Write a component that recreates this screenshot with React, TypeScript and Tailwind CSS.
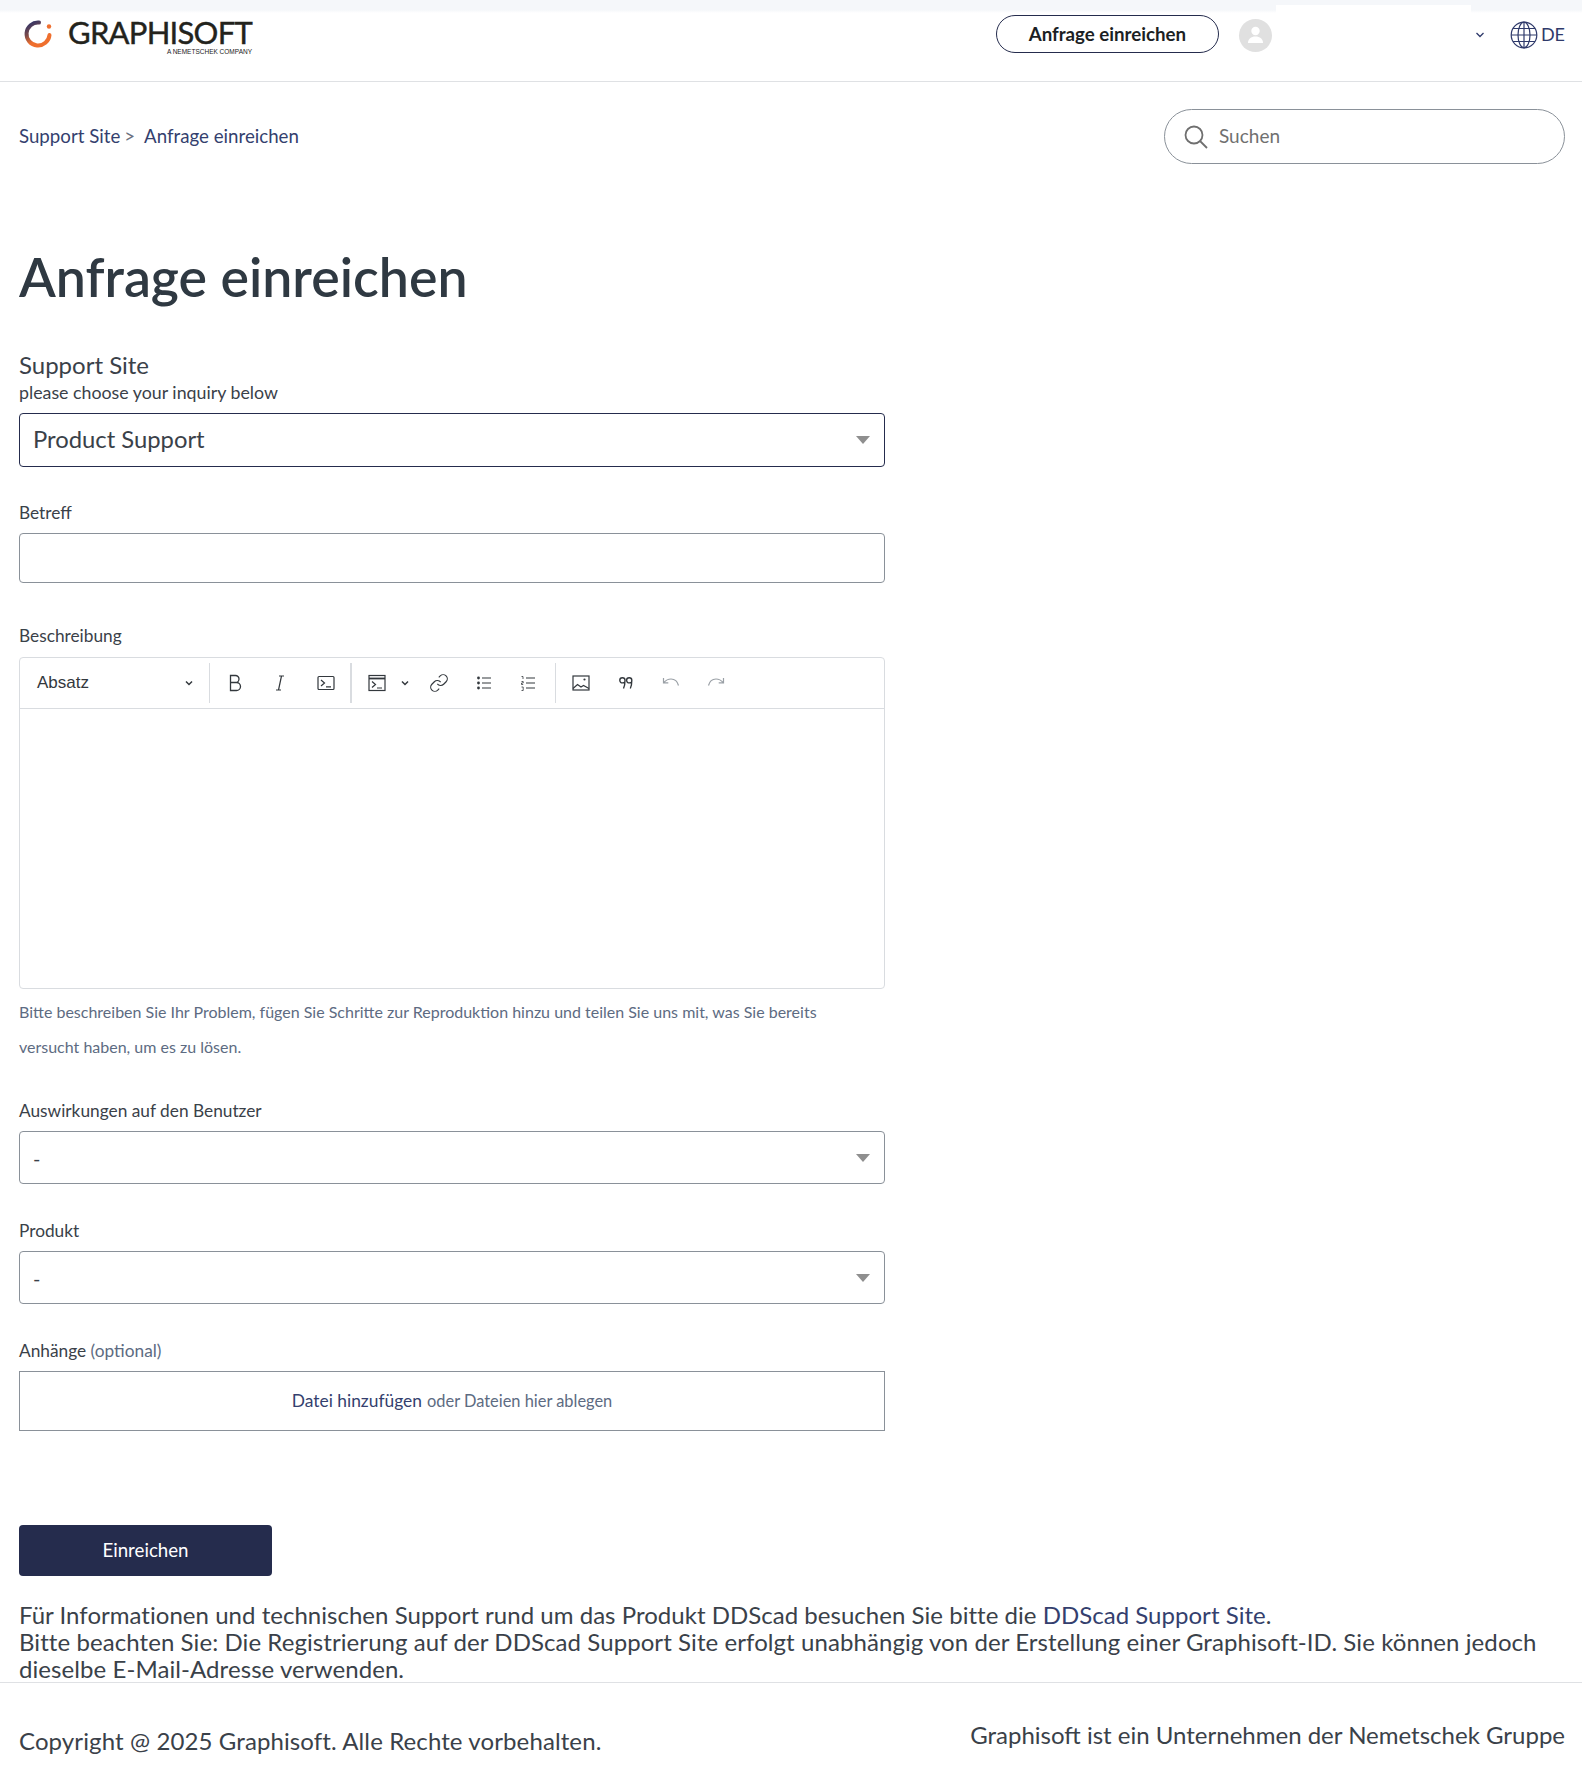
const FONT = "font-['Lato','Liberation_Sans',sans-serif]";

function GraphisoftLogo() {
  return (
    <div className="flex items-start">
      <svg width="32" height="32" viewBox="0 0 32 32" className="mt-[18px] ml-[22px]">
        <defs>
          <linearGradient id="ring" x1="0" y1="0" x2="0.5" y2="1">
            <stop offset="0" stopColor="#27306b" />
            <stop offset="0.45" stopColor="#7a4a4a" />
            <stop offset="0.8" stopColor="#ef6f2e" />
          </linearGradient>
        </defs>
        <path d="M17 4.5A11.5 11.5 0 1 0 27.5 17" fill="none" stroke="url(#ring)" strokeWidth="4" strokeLinecap="round" />
        <circle cx="27" cy="8.500" r="2.200" fill="#ef6f2e" />
      </svg>
      <div className="ml-[14px] mt-[16px] flex flex-col items-end">
        <span className="font-['Lato',sans-serif] text-[31px] leading-[32px] tracking-[-0.75px] text-[#23231c] [-webkit-text-stroke:0.4px_#23231c]">GRAPHISOFT</span>
        <span className="font-['Liberation_Sans',sans-serif] text-[6.500px] leading-[7px] text-[#23231c]">A NEMETSCHEK COMPANY</span>
      </div>
    </div>
  );
}

function GlobeIcon() {
  return (
    <svg width="28" height="28" viewBox="0 0 28 28" fill="none" stroke="#2f3a6b" strokeWidth="1.2">
      <circle cx="14" cy="14" r="12.8" />
      <ellipse cx="14" cy="14" rx="6" ry="12.8" />
      <path d="M14 1.2v25.6M1.2 14h25.6M3 7.5h22M3 20.5h22" />
    </svg>
  );
}

function SelectField({ value, large }: { value: string; large?: boolean }) {
  return (
    <div
      className={`flex items-center justify-between rounded-[4px] border pl-[13px] pr-[14px] ${
        large
          ? "h-[54px] border-[#252c4d] text-[23.800px] text-[#3a4149]"
          : "h-[53px] border-[#8a9199] text-[20px] text-[#3a4149]"
      }`}
    >
      <span>{value}</span>
      <svg width="14" height="8" viewBox="0 0 14 8">
        <path d="M0 0h14L7 8z" fill="#8f8f8f" />
      </svg>
    </div>
  );
}

function FieldLabel({ children }: { children: React.ReactNode }) {
  return <div className="text-[17.300px] leading-[21px] text-[#3a4149]">{children}</div>;
}

const iconProps = { width: 20, height: 20, viewBox: "0 0 20 20", fill: "none", stroke: "#33383d", strokeWidth: 1.1 };

function ToolButton({ children, width = "w-[45px]" }: { children: React.ReactNode; width?: string }) {
  return <div className={`flex h-[36px] items-center justify-center ${width}`}>{children}</div>;
}

function Divider() {
  return <div className="h-[40px] w-px bg-[#d9dce0]" />;
}

function Chevron() {
  return (
    <svg width="10" height="10" viewBox="0 0 10 10" fill="none" stroke="#33383d" strokeWidth="1.5">
      <path d="M2 3.5 5 6.5 8 3.5" />
    </svg>
  );
}

function EditorToolbar() {
  return (
    <div className="flex h-[51px] items-center border-b border-[#d9dce0] pl-[17px] text-[#33383d]">
      <div className="flex w-[172px] items-center justify-between pr-[15px] font-['Liberation_Sans',sans-serif] text-[17px]">
        <span>Absatz</span>
        <Chevron />
      </div>
      <Divider />
      <div className="flex w-[140px] items-center justify-between px-[2px]">
        <ToolButton>
          <svg {...iconProps}><path d="M5.5 2.5h5a3.4 3.4 0 0 1 0 7h-5zM5.5 9.5h6a3.9 3.9 0 0 1 0 8h-6z" strokeWidth="1.3" /></svg>
        </ToolButton>
        <ToolButton>
          <svg {...iconProps}><path d="M9 3h5M6 17h5M11.5 3 8.5 17" strokeWidth="1.2" /></svg>
        </ToolButton>
        <ToolButton>
          <svg {...iconProps} strokeWidth={1.2}><rect x="2" y="3.5" width="16" height="13" rx="1" /><path d="M5 7l3.5 3L5 13M10 13.8h5" /></svg>
        </ToolButton>
      </div>
      <div className="h-[40px] w-[2px] bg-[#d9dce0]" />
      <div className="flex items-center pl-[7.500px]">
        <ToolButton width="w-[35px]">
          <svg {...iconProps} strokeWidth={1.2}><rect x="2" y="2.5" width="16" height="15" /><path d="M2 5.5h16" strokeWidth="1.8" /><path d="M5 8.5l3.5 3L5 14.5M10 15h5" /></svg>
        </ToolButton>
        <ToolButton width="w-[21px]"><Chevron /></ToolButton>
        <ToolButton width="w-[46px]">
          <svg width="20" height="20" viewBox="0 0 24 24" fill="none" stroke="#33383d" strokeWidth="1.400">
            <path d="M10 13a5 5 0 0 0 7.54.54l3-3a5 5 0 0 0-7.07-7.07l-1.72 1.71" />
            <path d="M14 11a5 5 0 0 0-7.54-.54l-3 3a5 5 0 0 0 7.07 7.07l1.71-1.71" />
          </svg>
        </ToolButton>
        <ToolButton width="w-[44px]">
          <svg {...iconProps}><circle cx="4.5" cy="5" r="1.4" fill="#33383d" stroke="none" /><circle cx="4.5" cy="10" r="1.4" fill="#33383d" stroke="none" /><circle cx="4.5" cy="15" r="1.4" fill="#33383d" stroke="none" /><path d="M8 5h9M8 10h9M8 15h9" /></svg>
        </ToolButton>
        <ToolButton>
          <svg {...iconProps}><path d="M3.5 3.5h1.5v2.500M3.5 8.500h1.700v1.500h-1.700v1.500h1.700M3.500 14h1.700v3.500h-1.700" strokeWidth="0.8" /><path d="M8 5h9M8 10h9M8 15h9" /></svg>
        </ToolButton>
      </div>
      <div className="ml-[4px] h-[40px] w-px bg-[#d9dce0]" />
      <div className="flex items-center pl-[3px]">
        <ToolButton>
          <svg {...iconProps} strokeWidth={1.2}><rect x="2" y="3" width="16" height="14" /><circle cx="13.500" cy="6.500" r="1.100" fill="#33383d" stroke="none" /><path d="M2 15.500l4.500-4 3.500 2.500 2.500-1.500 5.500 3" /></svg>
        </ToolButton>
        <ToolButton>
          <svg {...iconProps} strokeWidth={1.400}>
            <path d="M9 7.300a2.600 2.600 0 1 0-2.600 2.600c.9 0 2-.3 2.600-.9M9 7.300c0 3.500-.5 6.200-1.500 8.200" />
            <path d="M15.800 7.300a2.600 2.600 0 1 0-2.600 2.600c.9 0 2-.3 2.600-.9M15.800 7.300c0 3.500-.5 6.200-1.500 8.200" />
          </svg>
        </ToolButton>
        <ToolButton>
          <svg {...iconProps} stroke="#9aa0a6" strokeWidth={1.200}><path d="M2.500 5v4.800h4.800M2.700 9.600C5 7 7.500 6 10 6c3.600 0 6.500 2.500 7.500 6.500" /></svg>
        </ToolButton>
        <ToolButton>
          <svg {...iconProps} stroke="#9aa0a6" strokeWidth={1.200}><path d="M17.500 5v4.800h-4.800M17.300 9.600C15 7 12.500 6 10 6c-3.600 0-6.500 2.500-7.500 6.500" /></svg>
        </ToolButton>
      </div>
    </div>
  );
}

export default function App() {
  return (
    <div className={`${FONT} min-h-[1786px] bg-white text-[#3a4149]`}>
      <header className="relative flex h-[82px] items-start justify-between border-b border-[#dfe1e4] bg-[linear-gradient(#f5f7fa_10px,#ffffff_13px)]">
        <GraphisoftLogo />
        <div className="absolute left-[1276px] top-[5px] h-[8px] w-[195px] bg-white" />
        <div className="flex items-center pr-[17px] pt-[15px]">
          <button className="mr-[1px] h-[38px] w-[223px] rounded-full border border-[#252c4d] pt-[1px] text-[18.700px] font-bold text-[#1c1f24]">
            Anfrage einreichen
          </button>
          <div className="ml-[19px] mt-[2px] flex h-[33px] w-[33px] items-center justify-center rounded-full bg-[#e0e0e0]">
            <svg width="17" height="18" viewBox="0 0 17 18" fill="#fff">
              <circle cx="8.500" cy="5" r="4.200" />
              <path d="M1 17c0-4 3-6.500 7.500-6.500S16 13 16 17z" />
            </svg>
          </div>
          <div className="ml-[203px] mt-[2px]">
            <svg width="10" height="10" viewBox="0 0 10 10" fill="none" stroke="#2f3a6b" strokeWidth="1.300">
              <path d="M1.500 3 5 6.500 8.500 3" />
            </svg>
          </div>
          <div className="ml-[25px] flex items-center gap-[3px] text-[18px] text-[#2f3a6b]">
            <span className="mt-[2px]"><GlobeIcon /></span>
            <span>DE</span>
          </div>
        </div>
      </header>

      <main className="pl-[19px] pr-[17px]">
        <div className="flex items-center justify-between pt-[27px]">
          <nav className="flex items-center text-[18.700px] text-[#343f6e]">
            <span>Support Site</span>
            <span className="ml-[4px] text-[#6b7280]">&gt;</span>
            <span className="ml-[9px]">Anfrage einreichen</span>
          </nav>
          <div className="flex h-[55px] w-[401px] items-center rounded-full border border-[#8a9199] pl-[18px]">
            <svg width="26" height="26" viewBox="0 0 26 26" fill="none" stroke="#6f6f6f" strokeWidth="1.800">
              <circle cx="11" cy="11" r="8.500" />
              <path d="M17 17l7 7" />
            </svg>
            <input placeholder="Suchen" className="ml-[10px] w-[300px] text-[19px] outline-none placeholder:text-[#707070]" />
          </div>
        </div>

        <h1 className="mt-[80px] text-[53.700px] font-semibold leading-[64px] text-[#2f3942]">Anfrage einreichen</h1>

        <form className="mt-[43px] w-[866px]">
          <div className="text-[24px] leading-[28px]">Support Site</div>
          <div className="mt-[2px] text-[17.800px] leading-[22px]">please choose your inquiry below</div>
          <div className="mt-[10px]"><SelectField value="Product Support" large /></div>

          <div className="mt-[35px]"><FieldLabel>Betreff</FieldLabel></div>
          <input className="mt-[10px] block h-[50px] w-full rounded-[4px] border border-[#8a9199] outline-none" />

          <div className="mt-[42px]"><FieldLabel>Beschreibung</FieldLabel></div>
          <div className="mt-[11px] h-[332px] rounded-[4px] border border-[#d9dce0]">
            <EditorToolbar />
          </div>
          <p className="mt-[5px] pr-[50px] text-[16px] leading-[35px] text-[#5d6b82]">
            Bitte beschreiben Sie Ihr Problem, fügen Sie Schritte zur Reproduktion hinzu und teilen Sie uns mit, was Sie bereits versucht haben, um es zu lösen.
          </p>

          <div className="mt-[36px]"><FieldLabel>Auswirkungen auf den Benutzer</FieldLabel></div>
          <div className="mt-[10px]"><SelectField value="-" /></div>

          <div className="mt-[36px]"><FieldLabel>Produkt</FieldLabel></div>
          <div className="mt-[10px]"><SelectField value="-" /></div>

          <div className="mt-[36px]"><FieldLabel>Anhänge <span className="text-[#5d6b82]">(optional)</span></FieldLabel></div>
          <div className="mt-[10px] flex h-[60px] items-center justify-center border border-[#8a9199] text-[16.400px] text-[#5d6b82]">
            <span className="text-[17.400px] text-[#343f6e]">Datei hinzufügen</span>
            <span className="ml-[5px]">oder Dateien hier ablegen</span>
          </div>

          <button type="button" className="mt-[94px] h-[51px] w-[253px] rounded-[4px] bg-[#252c4d] text-[18.700px] text-white">
            Einreichen
          </button>
        </form>

        <p className="mt-[25px] text-[24px] leading-[27px] text-[#3a4149]">
          <span className="tracking-[0.03px]">
            Für Informationen und technischen Support rund um das Produkt DDScad besuchen Sie bitte die <span className="text-[#343f6e]">DDScad Support Site</span>.
          </span>
          <br />
          <span className="tracking-[0.075px]">
            Bitte beachten Sie: Die Registrierung auf der DDScad Support Site erfolgt unabhängig von der Erstellung einer Graphisoft-ID. Sie können jedoch dieselbe E-Mail-Adresse verwenden.
          </span>
        </p>
      </main>

      <footer className="flex justify-between border-t border-[#dfe1e4] pl-[19px] pr-[17px] pt-[34px] text-[24px] leading-[28px] text-[#3a4149]">
        <span className="mt-[10px] tracking-[0.11px]">Copyright @ 2025 Graphisoft. Alle Rechte vorbehalten.</span>
        <span className="mt-[4px]">Graphisoft ist ein Unternehmen der Nemetschek Gruppe</span>
      </footer>
    </div>
  );
}
